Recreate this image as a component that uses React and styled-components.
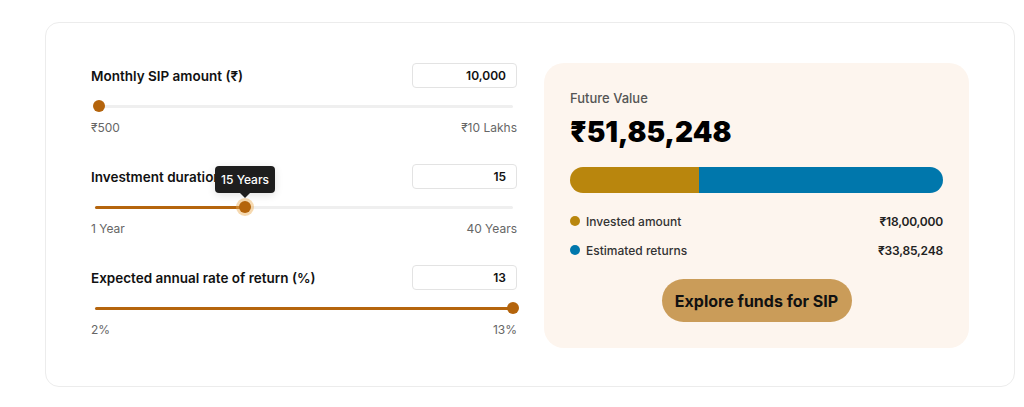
import React from 'react';
import styled, { createGlobalStyle } from 'styled-components';

const sliders = [
    { label: 'Monthly SIP amount (₹)', value: '10,000', min: '₹500', max: '₹10 Lakhs', pct: 0.01 },
    { label: 'Investment duration (Years)', value: '15', min: '1 Year', max: '40 Years', pct: 14 / 39, tip: '15 Years', filled: true },
    { label: 'Expected annual rate of return (%)', value: '13', min: '2%', max: '13%', pct: 1, filled: true },
];

const App = () => {
    return (
        <>
            <GlobalStyle />
            <Page>
                <Card>
                    <Inputs>
                        {sliders.map(s => (
                            <Field key={s.label}>
                                <FieldHead>
                                    <Label>{s.label}</Label>
                                    <ValueBox>{s.value}</ValueBox>
                                </FieldHead>
                                <Slider>
                                    <Track>
                                        {s.filled && <Fill style={{ width: `${s.pct * 100}%` }} />}
                                        <Thumb $active={!!s.tip} style={{ left: `${s.pct * 100}%` }}>
                                            {s.tip && <Tooltip>{s.tip}</Tooltip>}
                                        </Thumb>
                                    </Track>
                                </Slider>
                                <Range>
                                    <span>{s.min}</span>
                                    <span>{s.max}</span>
                                </Range>
                            </Field>
                        ))}
                    </Inputs>

                    <Result>
                        <ResultLabel>Future Value</ResultLabel>
                        <BigValue>₹51,85,248</BigValue>
                        <Bar>
                            <BarPart $color="#b9860d" style={{ width: '34.7%' }} />
                            <BarPart $color="#0077ac" style={{ flex: 1 }} />
                        </Bar>
                        <Legend>
                            <LegendRow>
                                <Dot $color="#b9860d" />
                                <LegendName>Invested amount</LegendName>
                                <LegendValue>₹18,00,000</LegendValue>
                            </LegendRow>
                            <LegendRow>
                                <Dot $color="#0077ac" />
                                <LegendName>Estimated returns</LegendName>
                                <LegendValue>₹33,85,248</LegendValue>
                            </LegendRow>
                        </Legend>
                        <ButtonWrap>
                            <Explore>Explore funds for SIP</Explore>
                        </ButtonWrap>
                    </Result>
                </Card>
            </Page>
        </>
    );
};

const GlobalStyle = createGlobalStyle`
  body {
    margin: 0;
    background: #fff;
    font-family: Inter, "Noto Sans", "DejaVu Sans", sans-serif;
    color: #111;
  }
`;

const Page = styled.div`
  padding: 22px 0 0 45px;
`;

const Card = styled.div`
  box-sizing: border-box;
  width: 970px;
  height: 365px;
  border: 1px solid #ececec;
  border-radius: 14px;
  padding: 40px 45px 0 45px;
  display: flex;
  gap: 27px;
  align-items: flex-start;
`;

const Inputs = styled.div`
  width: 426px;
  display: flex;
  flex-direction: column;
  gap: 28px;
`;

const Field = styled.div`
  display: flex;
  flex-direction: column;
`;

const FieldHead = styled.div`
  display: flex;
  justify-content: space-between;
  align-items: center;
  height: 25px;
`;

const Label = styled.div`
  font-size: 13.5px;
  font-weight: 600;
  color: #111;
`;

const ValueBox = styled.div`
  box-sizing: border-box;
  width: 105px;
  height: 25px;
  border: 1px solid #e3e3e3;
  border-radius: 4px;
  font-size: 12px;
  font-weight: 600;
  text-align: right;
  padding-right: 10px;
  line-height: 23px;
  color: #111;
`;

const Slider = styled.div`
  height: 20px;
  margin-top: 8px;
  padding: 0 4px;
  display: flex;
  align-items: center;
`;

const Track = styled.div`
  position: relative;
  flex: 1;
  height: 3px;
  border-radius: 2px;
  background: #efefef;
`;

const Fill = styled.div`
  height: 100%;
  border-radius: 2px;
  background: #b5650d;
`;

const Thumb = styled.div`
  position: absolute;
  top: 50%;
  width: 12px;
  height: 12px;
  margin: -6px 0 0 -6px;
  border-radius: 50%;
  background: #b4640c;
  box-shadow: ${p => (p.$active ? '0 0 0 3px rgba(236, 170, 80, 0.45)' : 'none')};
`;

const Tooltip = styled.div`
  position: absolute;
  bottom: 20px;
  left: 50%;
  transform: translateX(-50%);
  background: #1e1e1e;
  color: #fff;
  font-size: 12px;
  font-weight: 500;
  white-space: nowrap;
  padding: 0 6px;
  height: 27px;
  line-height: 27px;
  border-radius: 4px;
  box-shadow: 0 2px 8px rgba(0, 0, 0, 0.12);

  &::after {
    content: '';
    position: absolute;
    top: 100%;
    left: 50%;
    margin-left: -5px;
    border: 5px solid transparent;
    border-top-color: #1e1e1e;
  }
`;

const Range = styled.div`
  display: flex;
  justify-content: space-between;
  margin-top: 4px;
  font-size: 12px;
  line-height: 16px;
  color: #666;
`;

const Result = styled.div`
  box-sizing: border-box;
  width: 425px;
  height: 285px;
  background: #fdf5ee;
  border-radius: 20px;
  padding: 27px 26px 26px;
  display: flex;
  flex-direction: column;
`;

const ResultLabel = styled.div`
  font-size: 13px;
  line-height: 16px;
  font-weight: 500;
  color: #555;
`;

const BigValue = styled.div`
  margin-top: 9px;
  font-size: 28px;
  line-height: 34px;
  font-weight: 900;
  color: #000;
`;

const Bar = styled.div`
  display: flex;
  height: 26px;
  margin-top: 18px;
  border-radius: 13px;
  overflow: hidden;
`;

const BarPart = styled.div`
  background: ${p => p.$color};
`;

const Legend = styled.div`
  display: flex;
  flex-direction: column;
  gap: 13px;
  margin-top: 20px;
`;

const LegendRow = styled.div`
  display: flex;
  align-items: center;
  height: 16px;
  font-size: 12px;
`;

const Dot = styled.span`
  width: 10px;
  height: 10px;
  border-radius: 50%;
  background: ${p => p.$color};
  margin-right: 6px;
`;

const LegendName = styled.span`
  flex: 1;
  font-weight: 500;
  color: #333;
`;

const LegendValue = styled.span`
  font-weight: 600;
  color: #222;
  letter-spacing: -0.2px;
`;

const ButtonWrap = styled.div`
  display: flex;
  justify-content: center;
  margin-top: 21px;
`;

const Explore = styled.div`
  width: 190px;
  height: 43px;
  border-radius: 22px;
  background: #ca9c59;
  display: flex;
  justify-content: center;
  align-items: center;
  font-size: 16px;
  font-weight: 700;
  color: #111;
  cursor: pointer;
`;

export default App;
